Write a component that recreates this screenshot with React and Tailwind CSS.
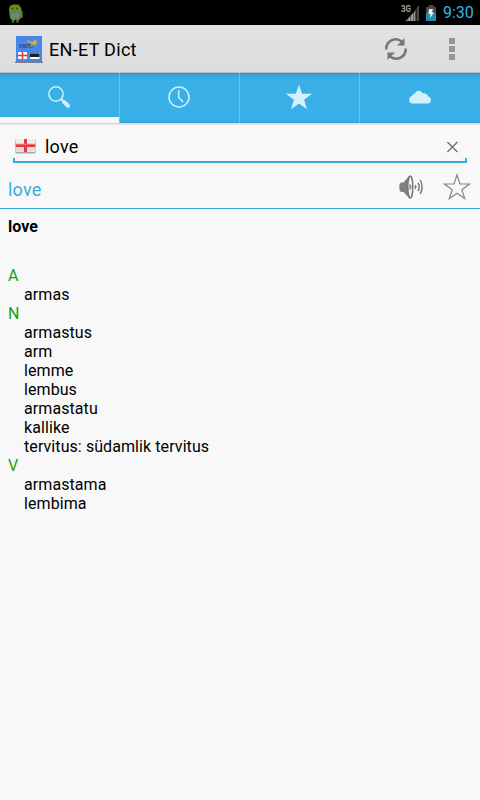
const entries = [
  { pos: "A", words: ["armas"] },
  {
    pos: "N",
    words: ["armastus", "arm", "lemme", "lembus", "armastatu", "kallike", "tervitus: südamlik tervitus"],
  },
  { pos: "V", words: ["armastama", "lembima"] },
];

function StatusBar() {
  return (
    <div className="flex h-[25px] items-center bg-black pl-2 pr-[6px]">
      <svg width="16" height="20" viewBox="0 0 16 20">
        <path d="M12 8h3v7h-3z" fill="#3f5212" />
        <path d="M1 7C1 3 3.500 1.500 7 1.500S13.500 3.500 13.500 7v7.500L11 17H4l-2-2z" fill="#70861f" />
        <path d="M2 1.500l2 2M11 1l-1 2" stroke="#52651b" />
        <path d="M5 17v2.500M9.500 17v2.500" stroke="#60751d" strokeWidth="2.400" />
        <circle cx="4.500" cy="5.500" r=".8" fill="#242f08" />
        <circle cx="9" cy="5.500" r=".8" fill="#242f08" />
        <path d="M2.500 9l3.500 1.500 5-1.500v3l-1.500 1 1.500 3-4-1.200L2.500 16l1.300-3-1.300-1z" fill="#5a88b0" />
      </svg>
      <div className="flex-1" />
      <svg width="18" height="18" viewBox="0 0 18 18">
        <text x="0" y="8" fontSize="8.500" fontWeight="bold" fill="#a5a5a5" fontFamily="Roboto, sans-serif" textLength="10" lengthAdjust="spacingAndGlyphs">3G</text>
        <path d="M4.500 17l10-10.500V17z" fill="#a0a0a0" />
        <path d="M14 6l4-5V17h-4z" fill="#484848" />
        <path d="M6.800 8v9M9.700 6v11M12.600 5v12M15.500 3v14" stroke="#000" strokeWidth=".5" />
      </svg>
      <svg width="10" height="16" viewBox="0 0 10 16" className="ml-[7px]">
        <path d="M2.500 0h5v2H10v14H0V2h2.500z" fill="#4b4b4b" />
        <path d="M0 8h10v8H0z" fill="#268cae" />
        <path d="M3 4h4L6 7.300h2L4 13l.500-4.200H2.300z" fill="#f2f2f2" />
      </svg>
      <span className="ml-[7px] w-[31px] whitespace-nowrap text-[16px] leading-[24px] text-[#33b5e5]">9:30</span>
    </div>
  );
}

function AppLogo() {
  return (
    <svg width="28" height="28" viewBox="0 0 28 28" className="mt-[2px]">
      <path d="M1 0h26v26H1z" fill="#4787e9" />
      <path d="M0 25.700h28V27H0z" fill="#7c7c7c" />
      <text x="4" y="11.500" fontSize="5" fontWeight="bold" fill="#354463" fontFamily="Roboto, sans-serif" textLength="14" lengthAdjust="spacingAndGlyphs">SYNETEC</text>
      <path d="M12 4l5 1.500 5-2-2 3 3.500-1-3.500 4-2-1-3 3.500 1.500-4.500-4-1z" fill="#c59d48" />
      <path d="M17 7l5-4-2 5z" fill="#eab743" />
      <path d="M3 16h9v7H3zM15 16h9.500v7H15z" fill="#f8f8f8" />
      <path d="M15 16h9.500v2H15z" fill="#4f7ed1" />
      <path d="M15 18h9.500v3H15z" fill="#202124" />
      <path d="M3 19.500h9M7.500 16v7" stroke="#dc3c45" strokeWidth="1.500" />
    </svg>
  );
}

function ActionBar() {
  return (
    <header className="flex h-12 items-center border-b border-[#bfc0c1] bg-gradient-to-b from-[#e2e2e2] to-[#dddddd] pl-[15px]">
      <AppLogo />
      <h1 className="ml-[6px] mt-[2px] flex-1 text-[18px] leading-6 tracking-[0.3px] text-black">EN-ET Dict</h1>
      <svg width="24" height="24" viewBox="0 0 24 24" className="mr-[41px]" fill="none" stroke="#777" strokeWidth="2.600">
        <path d="M2.300 12.500A9.500 9.500 0 0 1 17.800 4.500M21.700 11.500A9.500 9.500 0 0 1 6.200 19.500" />
        <path d="M20.500 1v7.500H13zM3.500 23v-7.500H11z" fill="#777" stroke="none" />
      </svg>
      <div className="mr-[25px] flex flex-col gap-[2px]">
        <i className="size-[6px] bg-[#969696]" />
        <i className="size-[6px] bg-[#969696]" />
        <i className="size-[6px] bg-[#969696]" />
      </div>
    </header>
  );
}

const tabIcons = [
  <svg key="search" width="24" height="24" viewBox="0 0 24 24" className="mb-px">
    <circle cx="9" cy="9" r="7.200" fill="none" stroke="#d2effb" strokeWidth="1.500" />
    <path d="M14 14l3 3" stroke="#d2effb" strokeWidth="2" />
    <path d="M17 17l4 3.800" stroke="#d2effb" strokeWidth="4" strokeLinecap="round" />
  </svg>,
  <svg key="history" width="24" height="24" viewBox="0 0 24 24" fill="none" stroke="#d2effb" strokeWidth="1.500">
    <circle cx="12" cy="12" r="10" />
    <path d="M11.700 5v7.500l4.500 4.500" />
  </svg>,
  <svg key="favorites" width="28" height="28" viewBox="0 0 28 28">
    <path d="M14 1.700l3.200 9H27l-7.900 6 2.900 9.600-8-5.800-8 5.800 2.900-9.600L1 10.700h9.800z" fill="#d1f2fb" />
  </svg>,
  <svg key="cloud" width="24" height="24" viewBox="0 0 24 24">
    <path d="M4.500 18.500a3.900 3.900 0 0 1-.5-7.600 3 3 0 0 1 2.700-2.400 4.500 4.500 0 0 1 8.200 0 3.600 3.600 0 0 1 5 3 3.600 3.600 0 0 1 .6 7z" fill="#d1f2fb" />
  </svg>,
];

function Tabs() {
  return (
    <nav className="grid h-[50px] grid-cols-4 bg-[#39b0e8] bg-[linear-gradient(#2786ba_0px,#329fd3_1px,#36a9df_3px,#39b0e8_7px,#39b0e8_47px,#32a4dc_50px)]">
      {tabIcons.map((icon, index) => (
        <button
          key={icon.key}
          className={index === 3 ? "flex flex-col" : "flex flex-col border-r border-[#62c4f3]"}
        >
          <span className={index === 3 ? "flex h-12 w-full items-center justify-center" : "flex h-12 w-full items-center justify-center pr-px"}>
            {icon}
          </span>
          {index === 0 && <span className="-mt-1 h-[6px] w-full bg-[#f8f8f8]" />}
        </button>
      ))}
    </nav>
  );
}

function SearchField() {
  return (
    <div className="mx-[13px] flex h-[29px] flex-col">
      <div className="flex h-[24px] items-center pt-[2px]">
        <svg width="22" height="16" viewBox="0 0 22 16" className="ml-[2px]">
          <rect x=".3" y="0" width="20.400" height="14.500" rx="1.500" fill="#a8a8a8" />
          <rect x=".8" y="0" width="19.400" height="13" rx="1" fill="#eee" />
          <path d="M.8 7h19.400v5.500H.8z" fill="#dedede" />
          <path d="M.8 6.500h19.400M10.500 0v13" stroke="#ef3539" strokeWidth="3" />
          <path d="M.8 5.200h19.400" stroke="#f48383" />
        </svg>
        <span className="ml-[8px] flex-1 text-[18px] leading-6 tracking-[0.2px] text-black">love</span>
        <svg width="12" height="12" viewBox="0 0 12 12" className="mr-[9px]">
          <path d="M1.400 1l10 10M11.400 1l-10 10" stroke="#717171" strokeWidth="1.300" />
        </svg>
      </div>
      <div className="h-[5px] border-x-2 border-b-2 border-[#33ade0]" />
    </div>
  );
}

function Headword() {
  return (
    <div className="flex h-[46px] items-center border-b border-[#33a8d8] pl-2 pr-[10px]">
      <h2 className="mt-[9px] flex-1 text-[18px] leading-6 tracking-[0.2px] text-[#33ade0]">love</h2>
      <svg width="26" height="26" viewBox="0 0 26 26" className="mt-[3px]">
        <path d="M3 8.500h2.500L11 2h1.500v22H11l-5.500-6H3l-1.600-2v-5.500z" fill="#808080" />
        <ellipse cx="12.300" cy="13" rx="2.500" ry="11" fill="#f8f8f8" stroke="#777" strokeWidth="1.500" />
        <path d="M11.500 9.500q4 3.500 0 7z" fill="#808080" />
        <path d="M17 11.300q1.600 1.700 0 3.400M20 9q2.600 4 0 8M22.300 6q3.500 7 0 14" fill="none" stroke="#777" strokeWidth="1.500" />
      </svg>
      <svg width="28" height="28" viewBox="0 0 28 28" className="-mr-[1px] ml-[19px] mt-[3px]">
        <path d="M14 2l3 9h9.500l-7.700 5.700L21.700 25.500 14 20.200 6.300 25.500l2.900-8.800L1.500 11H11z" fill="none" stroke="#858585" strokeWidth="1.200" />
      </svg>
    </div>
  );
}

export default function App() {
  return (
    <div className="h-[800px] w-[480px] overflow-hidden bg-[#f8f8f8] font-[Roboto,sans-serif]">
      <StatusBar />
      <ActionBar />
      <Tabs />
      <div className="h-[2px] bg-gradient-to-b from-[#cfcfcf] to-[#efefef]" />
      <div className="h-[38px] pt-[9px]">
        <SearchField />
      </div>
      <Headword />
      <main className="px-2 pt-[8px] text-[16px] leading-[19px] text-black">
        <p className="mb-[30px] font-bold">love</p>
        {entries.map((entry) => (
          <section key={entry.pos}>
            <h3 className="text-[#14a014]">{entry.pos}</h3>
            <ul className="pl-4 tracking-[0.08px]">
              {entry.words.map((word) => (
                <li key={word}>{word}</li>
              ))}
            </ul>
          </section>
        ))}
      </main>
    </div>
  );
}
